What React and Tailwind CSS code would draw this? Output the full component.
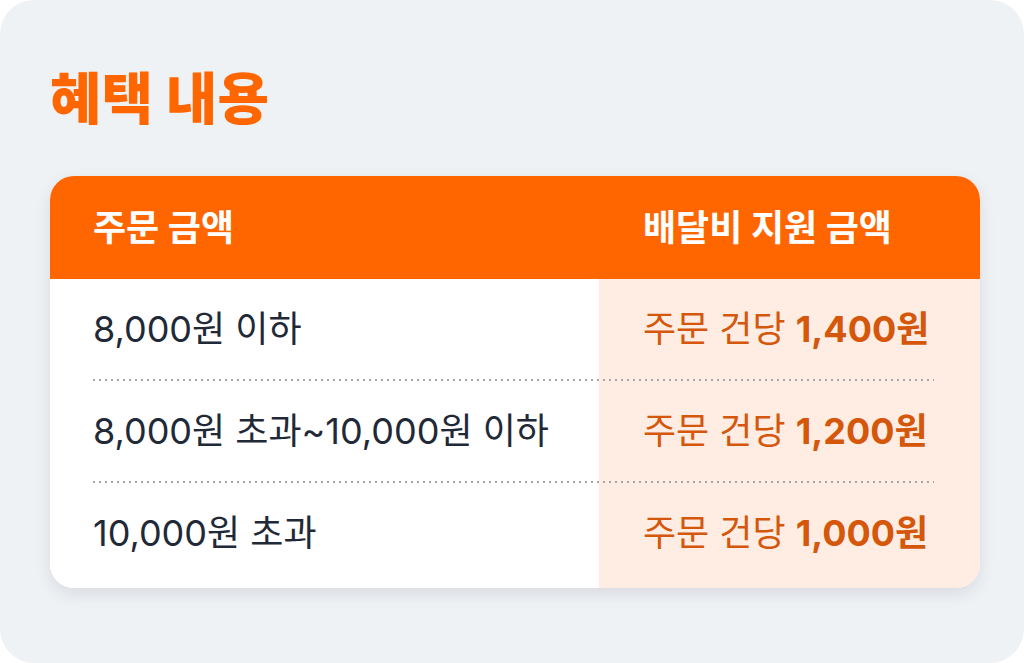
import React from "react"

const rows = [
  { range: "8,000원 이하", amount: "1,400원" },
  { range: "8,000원 초과~10,000원 이하", amount: "1,200원" },
  { range: "10,000원 초과", amount: "1,000원" },
]

const font = "font-['Inter','Noto_Sans_CJK_KR',sans-serif]"

export default function App() {
  return (
    <div className={`w-[1024px] h-[663px] bg-white ${font}`}>
      <div className="w-full h-full bg-[#eff2f5] rounded-[34px] pl-[50px] pr-[44px] pt-[61px]">
        {/* Title */}
        <h1 className="text-[56px] leading-[68px] font-black text-[#ff6600] font-['Noto_Sans_CJK_KR',sans-serif]">
          혜택 내용
        </h1>

        {/* Table */}
        <div className="mt-[47px] rounded-[24px] overflow-hidden bg-white shadow-[0_6px_16px_rgba(15,23,42,0.10)]">
          <div className="flex h-[103px] items-center bg-[#ff6600] text-white text-[36px] font-bold">
            <div className="w-[549px] pl-[43px]">주문 금액</div>
            <div className="flex-1 pl-[44px]">배달비 지원 금액</div>
          </div>

          <div className="pb-[5px] bg-[linear-gradient(to_right,#ffffff_549px,#ffede3_549px)]">
            {rows.map((row, i) => (
              <div key={i}>
                {i > 0 && (
                  <div className="ml-[43px] mr-[46px] h-[2px] bg-[linear-gradient(to_right,#a3a6ab_2px,transparent_2px)] bg-[length:6px_2px]"></div>
                )}
                <div className="flex h-[100px] items-center text-[36px]">
                  <div className="w-[549px] pl-[43px] text-[#1f2937]">{row.range}</div>
                  <div className="flex-1 pl-[44px] text-[#d4570b]">
                    주문 건당 <span className="font-bold">{row.amount}</span>
                  </div>
                </div>
              </div>
            ))}
          </div>
        </div>
      </div>
    </div>
  )
}
